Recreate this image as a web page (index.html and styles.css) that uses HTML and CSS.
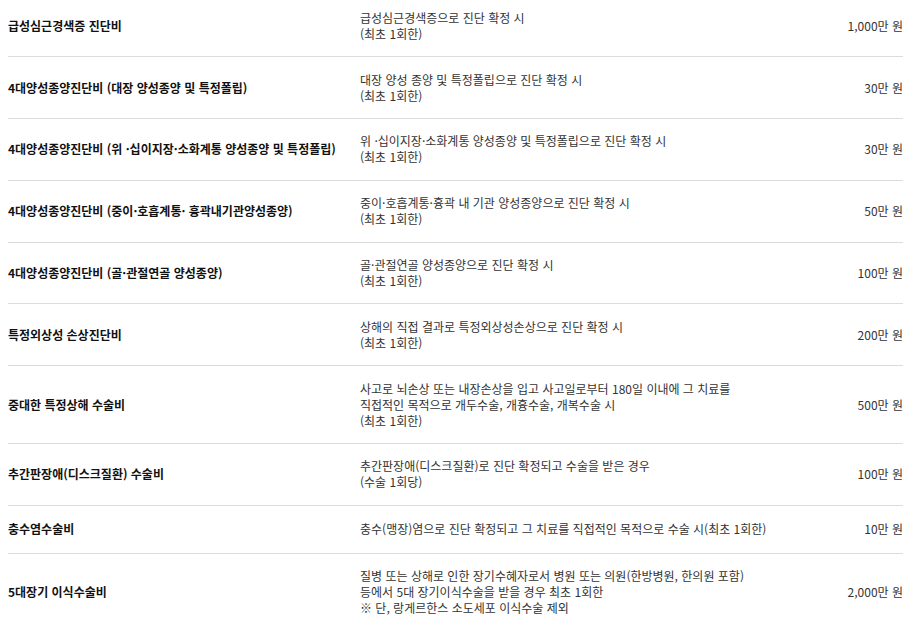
FILE: index.html
```html
<!DOCTYPE html>
<html lang="ko">
<head>
<meta charset="utf-8">
<link rel="stylesheet" href="styles.css">
</head>
<body>
<div class="table">
  <div class="row">
    <div class="title">급성심근경색증 진단비</div>
    <div class="desc">급성심근경색증으로 진단 확정 시<br>(최초 1회한)</div>
    <div class="amount">1,000만 원</div>
  </div>
  <div class="row">
    <div class="title">4대양성종양진단비 (대장 양성종양 및 특정폴립)</div>
    <div class="desc">대장 양성 종양 및 특정폴립으로 진단 확정 시<br>(최초 1회한)</div>
    <div class="amount">30만 원</div>
  </div>
  <div class="row">
    <div class="title">4대양성종양진단비 (위 ·십이지장·소화계통 양성종양 및 특정폴립)</div>
    <div class="desc">위 ·십이지장·소화계통 양성종양 및 특정폴립으로 진단 확정 시<br>(최초 1회한)</div>
    <div class="amount">30만 원</div>
  </div>
  <div class="row">
    <div class="title">4대양성종양진단비 (중이·호흡계통· 흉곽내기관양성종양)</div>
    <div class="desc">중이·호흡계통·흉곽 내 기관 양성종양으로 진단 확정 시<br>(최초 1회한)</div>
    <div class="amount">50만 원</div>
  </div>
  <div class="row">
    <div class="title">4대양성종양진단비 (골·관절연골 양성종양)</div>
    <div class="desc">골·관절연골 양성종양으로 진단 확정 시<br>(최초 1회한)</div>
    <div class="amount">100만 원</div>
  </div>
  <div class="row">
    <div class="title">특정외상성 손상진단비</div>
    <div class="desc">상해의 직접 결과로 특정외상성손상으로 진단 확정 시<br>(최초 1회한)</div>
    <div class="amount">200만 원</div>
  </div>
  <div class="row">
    <div class="title">중대한 특정상해 수술비</div>
    <div class="desc">사고로 뇌손상 또는 내장손상을 입고 사고일로부터 180일 이내에 그 치료를<br>직접적인 목적으로 개두수술, 개흉수술, 개복수술 시<br>(최초 1회한)</div>
    <div class="amount">500만 원</div>
  </div>
  <div class="row">
    <div class="title">추간판장애(디스크질환) 수술비</div>
    <div class="desc">추간판장애(디스크질환)로 진단 확정되고 수술을 받은 경우<br>(수술 1회당)</div>
    <div class="amount">100만 원</div>
  </div>
  <div class="row">
    <div class="title">충수염수술비</div>
    <div class="desc">충수(맹장)염으로 진단 확정되고 그 치료를 직접적인 목적으로 수술 시(최초 1회한)</div>
    <div class="amount">10만 원</div>
  </div>
  <div class="row">
    <div class="title">5대장기 이식수술비</div>
    <div class="desc">질병 또는 상해로 인한 장기수혜자로서 병원 또는 의원(한방병원, 한의원 포함)<br>등에서 5대 장기이식수술을 받을 경우 최초 1회한<br>※ 단, 랑게르한스 소도세포 이식수술 제외</div>
    <div class="amount">2,000만 원</div>
  </div>
</div>
</body>
</html>
```

FILE: styles.css
```css
html, body {
  background: #fff;
}
body {
  margin: 0 8px;
  font-family: "Noto Sans CJK KR", "Noto Sans", sans-serif;
  color: #222;
}
.table {
  margin-top: -4.5px;
  width: 895px;
}
.row {
  display: grid;
  grid-template-columns: 352px 1fr auto;
  align-items: center;
  padding: 14.4px 0;
  border-bottom: 1px solid #dcdcdc;
}
.title {
  font-size: 12px;
  font-weight: 700;
  line-height: 18px;
  color: #111;
}
.desc {
  font-size: 12px;
  line-height: 16px;
  color: #333;
}
.amount {
  font-size: 12px;
  line-height: 16px;
  color: #333;
  text-align: right;
}
```
